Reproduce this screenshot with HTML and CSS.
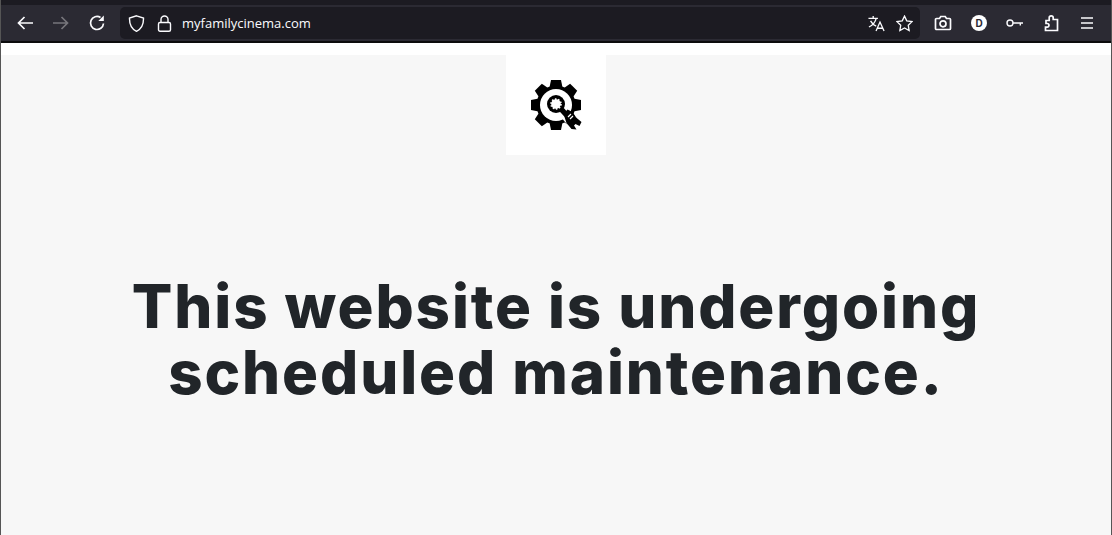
FILE: index.html
```html
<!DOCTYPE html>
<html lang="en">
<head>
<meta charset="utf-8">
<title>myfamilycinema.com</title>
<link rel="stylesheet" href="styles.css">
</head>
<body>
<header class="toolbar">
  <nav class="nav-group">
    <svg class="icon" viewBox="0 0 18 18"><path d="M17 9H2.500M8.500 3 2.500 9l6 6"/></svg>
    <svg class="icon icon-dim" viewBox="0 0 18 18"><path d="M1 9h14.500M9.500 3l6 6-6 6"/></svg>
    <svg class="icon" viewBox="0 0 18 18"><path d="M15.500 9.500A6.500 6.500 0 1 1 12.500 3.500"/><path class="fill" d="M15.800 1.500v5.500h-5.500z"/></svg>
  </nav>
  <div class="urlbar">
    <svg class="icon-sm" viewBox="0 0 16 17"><path d="M8 .8 15 3c.2 6.600-1.600 10.800-7 13.300C2.600 13.800.8 9.600 1 3z"/></svg>
    <svg class="icon-sm lock" viewBox="0 0 14 17"><path d="M3.500 7.500V4.500a3.500 3.500 0 0 1 7 0v3"/><rect x="1" y="7.500" width="12" height="8.700" rx="1.500"/></svg>
    <span class="url">myfamilycinema.com</span>
    <span class="spacer"></span>
    <svg class="icon-sm translate" viewBox="0 0 18 18"><path d="M.5 3.500h10M5.500 1v2.500M8.700 3.500C7.700 7.500 5 10.700 1 12.700M2.700 6.200c1.300 2.500 3.300 4.500 6 5.500"/><path d="M8.500 17 12.700 7.500 17 17M10 14h5.500"/></svg>
    <svg class="icon-sm star" viewBox="0 0 18 18"><path d="m9 1.200 2.400 5 5.600.8-4 3.900.9 5.600-4.900-2.700-4.900 2.700.9-5.600-4-3.900 5.600-.8z"/></svg>
  </div>
  <div class="actions">
    <svg class="icon" viewBox="0 0 18 18"><path d="M2.500 4.500h3l1.300-2h4.400l1.300 2h3a1 1 0 0 1 1 1v9a1 1 0 0 1-1 1h-13a1 1 0 0 1-1-1v-9a1 1 0 0 1 1-1z"/><circle cx="9" cy="9.800" r="3"/></svg>
    <span class="avatar">D</span>
    <svg class="icon icon-thin" viewBox="0 0 18 18"><circle cx="4" cy="9" r="3"/><path d="M7 9h10M14.300 9v2.500"/></svg>
    <svg class="icon" viewBox="0 0 18 18"><path d="M3.500 16.500h12V5.500h-4.300V3.800a2 2 0 0 0-4 0v2.700H4v3h1.200a1.800 1.800 0 0 1 0 3.600H3.500z"/></svg>
    <svg class="icon" viewBox="0 0 18 18"><path d="M3 4h12M3 9h12M3 14h12"/></svg>
  </div>
</header>
<main class="page">
  <div class="top-strip"></div>
  <div class="logo">
    <svg class="gear" viewBox="-0.500 -1 52 52">
      <g class="gear-body">
        <circle cx="25.500" cy="25" r="19.500"/>
        <path d="M20.500 0h10l1.800 9h-13.600z"/>
        <path d="M20.500 0h10l1.800 9h-13.600z" transform="rotate(45 25.500 25)"/>
        <path d="M20.500 0h10l1.800 9h-13.600z" transform="rotate(90 25.500 25)"/>
        <path d="M20.500 0h10l1.800 9h-13.600z" transform="rotate(135 25.500 25)"/>
        <path d="M20.500 0h10l1.800 9h-13.600z" transform="rotate(180 25.500 25)"/>
        <path d="M20.500 0h10l1.800 9h-13.600z" transform="rotate(225 25.500 25)"/>
        <path d="M20.500 0h10l1.800 9h-13.600z" transform="rotate(270 25.500 25)"/>
        <path d="M20.500 0h10l1.800 9h-13.600z" transform="rotate(315 25.500 25)"/>
      </g>
      <circle class="cut" cx="25.500" cy="25" r="16"/>
      <path class="cut-line" d="M34 33 47 48"/>
      <circle class="gear-body" cx="25.500" cy="24" r="9"/>
      <circle class="core" cx="25.500" cy="24" r="4.800"/>
      <path class="shaft" d="M31 29.500 36 35"/>
      <path class="gear-body" d="M33 34 37 29.500 42 32 45 37 51 42 49 46 45 44 43.500 45.500 46 49.500 41 49 36 43z"/>
      <path class="mark" d="m37.500 37 3-3M39.500 39l3-3"/>
    </svg>
  </div>
  <h1 class="headline">This website is undergoing scheduled maintenance.</h1>
</main>
</body>
</html>
```
FILE: styles.css
```css
* { box-sizing: border-box; }
html, body { margin: 0; height: 100%; overflow: hidden; }
body { display: flex; flex-direction: column; background: #f7f7f7; border-left: 1px solid #555; border-right: 1px solid #555; }
.toolbar { flex: none; height: 43px; display: flex; align-items: center; background: #2b2a33; border-top: 5px solid #1c1b22; border-bottom: 2px solid #0c0c0d; padding-left: 15px; }
.nav-group { display: flex; align-items: center; gap: 18px; width: 104px; }
.icon { width: 18px; height: 18px; fill: none; stroke: #fbfbfe; stroke-width: 1.700; flex: none; }
.icon-thin { stroke-width: 1.400; }
.icon-dim { stroke: #77767c; }
.fill { fill: #fbfbfe; stroke: none; }
.urlbar { width: 800px; height: 32px; display: flex; align-items: center; background: #1c1b22; border-radius: 5px; padding: 0 7px 0 8px; }
.icon-sm { width: 17px; height: 17px; fill: none; stroke: #fbfbfe; stroke-width: 1.400; flex: none; }
.lock { margin-left: 11px; }
.url { margin-left: 9px; font: 13px "Open Sans", "Liberation Sans", sans-serif; color: #fbfbfe; }
.spacer { flex: 1; }
.star { margin-left: 11px; }
.actions { display: flex; align-items: center; gap: 18px; padding-left: 14px; }
.avatar { width: 16px; height: 16px; margin: 0 1px; border-radius: 50%; background: #fff; color: #2b2a33; font: 700 10px/16px "Inter", sans-serif; text-align: center; }
.page { flex: 1; display: flex; flex-direction: column; align-items: center; }
.top-strip { align-self: stretch; height: 12px; background: #fff; }
.logo { width: 100px; height: 100px; background: #fff; display: flex; align-items: center; justify-content: center; }
.gear { width: 52px; height: 52px; }
.gear-body { fill: #000; }
.cut { fill: #fff; }
.cut-line { stroke: #fff; stroke-width: 11; fill: none; }
.core { fill: #fff; stroke: #fff; stroke-width: 2; stroke-dasharray: 1.500 1.500; }
.shaft { stroke: #000; stroke-width: 5.500; fill: none; }
.mark { stroke: #fff; stroke-width: 1.200; fill: none; }
.headline { margin: 118px 0 0; width: 900px; text-align: center; font: 800 60px/66px "Inter", "Liberation Sans", sans-serif; letter-spacing: 1.900px; color: #212529; }
```
